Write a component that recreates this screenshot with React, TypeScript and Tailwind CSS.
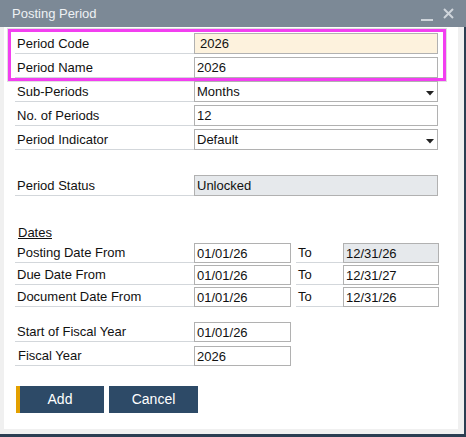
interface RowProps {
  label: string
  value: string
  fieldClass?: string
  dropdown?: boolean
  labelPad?: string
  valuePad?: string
  h?: string
}

function Row({ label, value, fieldClass = 'bg-white', dropdown, labelPad = 'pl-[2px]', valuePad = 'pl-[2px]', h = 'h-[21px]' }: RowProps): React.JSX.Element {
  return (
    <div className={`flex ${h}`}>
      <div className={`flex w-[179px] items-center border-b border-[#d3d7db] ${labelPad}`}>{label}</div>
      <div className={`relative flex w-[244px] items-center border border-[#b1b1b1] ${valuePad} ${fieldClass}`}>
        {value}
        {dropdown && (
          <svg className="absolute right-[3px] top-[9px]" width="8" height="5" viewBox="0 0 8 5">
            <path d="M0 0 H8 L4 4.5 Z" fill="#222" />
          </svg>
        )}
      </div>
    </div>
  )
}

interface DateRowProps {
  label: string
  from: string
  to: string
  toReadonly?: boolean
}

function DateRow({ label, from, to, toReadonly }: DateRowProps): React.JSX.Element {
  return (
    <div className="flex h-[20px]">
      <div className="flex w-[179px] items-center border-b border-[#d3d7db] pl-[2px]">{label}</div>
      <div className="flex w-[97px] items-center border border-[#b1b1b1] bg-white pl-[2px]">{from}</div>
      <div className="ml-[5px] flex w-[47px] items-center border-b border-[#d3d7db] pl-[2px]">To</div>
      <div
        className={`flex w-[96px] items-center border border-[#b1b1b1] pl-[2px] ${toReadonly ? 'bg-[#e6e9ec]' : 'bg-white'}`}
      >
        {to}
      </div>
    </div>
  )
}

export default function App(): React.JSX.Element {
  return (
    <div className="flex h-[437px] w-[466px] flex-col font-['Liberation_Sans',Arial,sans-serif] text-[13px] leading-[15px] text-[#111]">
      {/* title bar */}
      <div className="flex h-[27px] items-center bg-[#7c8996] pl-[12px] pr-[12px] text-[#eef1f4]">
        <span className="flex-1">Posting Period</span>
        <svg width="12" height="12" viewBox="0 0 12 12" className="mr-[10px] mt-[4px]">
          <rect x="0" y="9" width="12" height="2" fill="#cfd5db" />
        </svg>
        <svg width="11" height="11" viewBox="0 0 11 11">
          <path d="M1 1 L10 10 M10 1 L1 10" stroke="#cfd5db" strokeWidth="2" />
        </svg>
      </div>

      <div className="flex flex-1 border-b-[3px] border-r-2 border-[#2b3e52] bg-[#f0f0f0] pb-[5px] pl-1 pr-[6px]">
        <div className="flex flex-1 flex-col bg-white pl-[11px] pt-[6px]">
          <div className="relative flex w-[423px] flex-col gap-[3px]">
            <div className="pointer-events-none absolute -bottom-[3px] -left-[7px] -right-[8px] -top-[4px] border-[3px] border-[#f23ff0] shadow-[0_0_0_1px_rgba(0,0,0,0.12)]" />
            <Row label="Period Code" value="2026" fieldClass="bg-[#fdf2dd]" valuePad="pl-[5px]" />
            <Row label="Period Name" value="2026" />
          </div>
          <div className="mt-[3px] flex flex-col gap-[3px]">
            <Row label="Sub-Periods" value="Months" dropdown />
            <Row label="No. of Periods" value="12" />
            <Row label="Period Indicator" value="Default" dropdown />
          </div>
          <div className="mt-[25px]">
            <Row label="Period Status" value="Unlocked" fieldClass="bg-[#e6e9ec]" />
          </div>

          <div className="mt-[29px] h-[16px] pl-[3px] underline">Dates</div>
          <div className="mt-[2px] flex flex-col gap-[2px]">
            <DateRow label="Posting Date From" from="01/01/26" to="12/31/26" toReadonly />
            <DateRow label="Due Date From" from="01/01/26" to="12/31/27" />
            <DateRow label="Document Date From" from="01/01/26" to="12/31/26" />
          </div>

          <div className="mt-[15px] flex flex-col gap-[4px]">
            <div className="flex h-[20px]">
              <div className="flex w-[179px] items-center border-b border-[#d3d7db] pl-[2px]">Start of Fiscal Year</div>
              <div className="flex w-[97px] items-center border border-[#b1b1b1] bg-white pl-[2px]">01/01/26</div>
            </div>
            <div className="flex h-[20px]">
              <div className="flex w-[179px] items-center border-b border-[#d3d7db] pl-[3px]">Fiscal Year</div>
              <div className="flex w-[97px] items-center border border-[#b1b1b1] bg-white pl-[2px]">2026</div>
            </div>
          </div>

          <div className="mt-[20px] flex gap-[5px] pl-[1px] text-[14px] text-white">
            <button type="button" className="flex h-[27px] w-[88px] items-center justify-center border-l-[4px] border-[#e3a000] bg-[#2d4a67] pr-[4px]">
              Add
            </button>
            <button type="button" className="flex h-[27px] w-[89px] items-center justify-center bg-[#2d4a67]">
              Cancel
            </button>
          </div>
        </div>
      </div>
    </div>
  )
}
